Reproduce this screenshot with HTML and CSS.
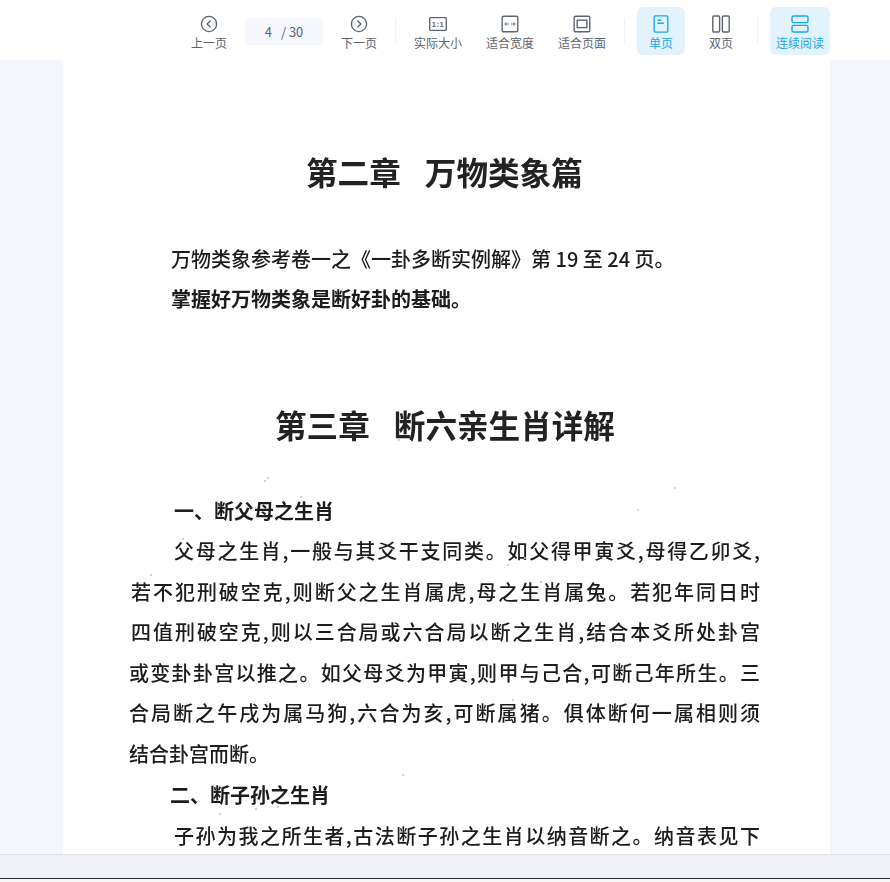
FILE: index.html
```html
<!DOCTYPE html>
<html lang="zh-CN">
<head>
    <meta charset="UTF-8">
    <title>PDF 阅读</title>
    <link rel="stylesheet" href="styles.css">
</head>
<body>

<div class="app">
    <div class="toolbar">
        <div class="tool">
            <svg class="icon" viewBox="0 0 18 18"><circle cx="9" cy="9" r="7.6"/><path d="M10.6 5.6 7.2 9l3.4 3.4"/></svg>
            <span>上一页</span>
        </div>
        <div class="pager"><span class="cur">4</span><span>/ 30</span></div>
        <div class="tool">
            <svg class="icon" viewBox="0 0 18 18"><circle cx="9" cy="9" r="7.6"/><path d="M7.4 5.6 10.8 9l-3.4 3.4"/></svg>
            <span>下一页</span>
        </div>
        <div class="sep"></div>
        <div class="tool wide">
            <svg class="icon" viewBox="0 0 18 18"><rect x="0.7" y="2.6" width="16.6" height="12.8" rx="1"/><text x="9" y="11.6" class="ratio">1:1</text></svg>
            <span>实际大小</span>
        </div>
        <div class="tool wide">
            <svg class="icon" viewBox="0 0 18 18"><rect x="1.2" y="1.2" width="15.6" height="15.6" rx="1.4"/><path class="thin" d="M3.8 9h4.2M5.5 7.2 3.8 9l1.7 1.8M14.2 9H10M12.5 7.2 14.2 9l-1.7 1.8"/></svg>
            <span>适合宽度</span>
        </div>
        <div class="tool wide">
            <svg class="icon" viewBox="0 0 18 18"><rect x="1.2" y="1.2" width="15.6" height="15.6" rx="1.4"/><rect x="4.2" y="5.2" width="9.6" height="7.4"/></svg>
            <span>适合页面</span>
        </div>
        <div class="sep"></div>
        <div class="tool active">
            <svg class="icon" viewBox="0 0 18 18"><rect x="2.2" y="0.9" width="13.6" height="16.2" rx="1.2"/><path d="M5.4 5.2h4M5.4 8.2h6.4"/></svg>
            <span>单页</span>
        </div>
        <div class="tool">
            <svg class="icon" viewBox="0 0 18 18"><rect x="0.8" y="1" width="6.8" height="16" rx="1"/><rect x="10.4" y="1" width="6.8" height="16" rx="1"/></svg>
            <span>双页</span>
        </div>
        <div class="sep"></div>
        <div class="tool wide active">
            <svg class="icon" viewBox="0 0 18 18"><rect x="1" y="1" width="16" height="6.6" rx="1.4"/><rect x="1" y="10.4" width="16" height="6.6" rx="1.4"/></svg>
            <span>连续阅读</span>
        </div>
    </div>

    <div class="viewer">
        <div class="page">
            <svg class="specks" viewBox="0 0 767 794">
                <circle cx="202" cy="421" r="1"/><circle cx="238" cy="437" r="1"/><circle cx="415" cy="490" r="1.2"/>
                <circle cx="445" cy="505" r="1"/><circle cx="462" cy="498" r="1"/><circle cx="478" cy="522" r="1"/>
                <circle cx="120" cy="479" r="1"/><circle cx="88" cy="515" r="1"/><circle cx="530" cy="612" r="1"/>
                <circle cx="612" cy="428" r="1"/><circle cx="575" cy="450" r="1"/><circle cx="340" cy="715" r="1"/>
                <circle cx="193" cy="749" r="1"/><circle cx="215" cy="747" r="1"/><circle cx="157" cy="754" r="1"/>
                <circle cx="336" cy="380" r="1"/><circle cx="205" cy="418" r="1"/><circle cx="450" cy="640" r="1"/>
            </svg>
            <h1 class="chapter ch2">第二章<span class="gap"></span>万物类象篇</h1>
            <p class="intro first">万物类象参考卷一之《一卦多断实例解》第 19 至 24 页。</p>
            <p class="intro bold">掌握好万物类象是断好卦的基础。</p>
            <h1 class="chapter ch3">第三章<span class="gap"></span>断六亲生肖详解</h1>
            <div class="body">
                <p class="sub sub1">一、断父母之生肖</p>
                <p class="line indent">父母之生肖,一般与其爻干支同类。如父得甲寅爻,母得乙卯爻,</p>
                <p class="line nudge">若不犯刑破空克,则断父之生肖属虎,母之生肖属兔。若犯年同日时</p>
                <p class="line nudge">四值刑破空克,则以三合局或六合局以断之生肖,结合本爻所处卦宫</p>
                <p class="line">或变卦卦宫以推之。如父母爻为甲寅,则甲与己合,可断己年所生。三</p>
                <p class="line">合局断之午戌为属马狗,六合为亥,可断属猪。俱体断何一属相则须</p>
                <p class="line short">结合卦宫而断。</p>
                <p class="sub sub2">二、断子孙之生肖</p>
                <p class="line indent last">子孙为我之所生者,古法断子孙之生肖以纳音断之。纳音表见下</p>
            </div>
        </div>
    </div>

    <div class="statusbar"></div>
    <div class="winedge"></div>
</div>

</body>
</html>
```

FILE: styles.css
```css
:root {
    --ink: #1c1c1c;
    --blue: #1ea7ea;
    --tool-text: #5d6470;
    --tool-icon: #5f6672;
    --viewer-bg: #f5f6fb;
}

* { box-sizing: border-box; }

body {
    margin: 0;
    background: var(--viewer-bg);
    font-family: "Noto Sans CJK SC", "Noto Sans", sans-serif;
}

.app { display: flex; flex-direction: column; height: 882px; overflow: hidden; }

/* toolbar */
.toolbar {
    flex: none;
    height: 60px;
    background: #fff;
    display: flex;
    justify-content: flex-end;
    align-items: center;
    gap: 12px;
    padding: 2px 60px 0 0;
}

.tool {
    width: 48px;
    height: 48px;
    padding-top: 3px;
    border-radius: 6px;
    display: flex;
    flex-direction: column;
    align-items: center;
    justify-content: center;
    font-size: 12px;
    line-height: 16px;
    color: var(--tool-text);
}
.tool.wide { width: 60px; }
.tool.active { background: #e3f3fd; color: var(--blue); }

.icon {
    width: 18px;
    height: 18px;
    margin-bottom: 2px;
    fill: none;
    stroke: var(--tool-icon);
    stroke-width: 1.4;
}
.icon .thin { stroke-width: 0.9; }
.icon .ratio {
    font-family: "Liberation Sans", sans-serif;
    font-size: 7.5px;
    font-weight: 700;
    letter-spacing: 0.5px;
    text-anchor: middle;
    fill: var(--tool-icon);
    stroke: none;
}
.active .icon { stroke: var(--blue); }

.pager {
    width: 78px;
    height: 27px;
    border-radius: 4px;
    background: #f6f7fc;
    display: flex;
    justify-content: center;
    align-items: center;
    gap: 9px;
    font-size: 13px;
    color: #5d6470;
}

.sep { width: 1px; height: 26px; background: #f1f2f5; }

/* document */
.viewer { flex: 1; min-height: 0; overflow: hidden; }

.page {
    position: relative;
    width: 767px;
    height: 794px;
    margin-left: 63px;
    background: #fff;
    color: var(--ink);
    font-weight: 500;
    filter: blur(0.35px);
}

.specks { position: absolute; top: 0; left: 0; width: 100%; height: 100%; fill: #c4c4c4; }

.page p, .page h1 { margin: 0; white-space: nowrap; }

.chapter { font-weight: 700; font-size: 31.6px; line-height: 44px; color: #222; }
.chapter .gap { display: inline-block; width: 24px; }
.ch2 { padding: 89px 0 0 243px; }
.ch3 { padding: 0 0 0 212px; margin-top: 83px !important; }

.intro { font-size: 20px; line-height: 40px; padding-left: 108px; }
.intro.first { margin-top: 46px; }
.intro.bold { font-weight: 700; }

.body { padding: 0 70px 0 66px; margin-top: 45px; }

.sub { font-size: 20px; line-height: 40px; font-weight: 700; }
.sub1 { padding-left: 45px; }
.sub2 { padding-left: 41px; }

.line {
    font-size: 20px;
    line-height: 40.6px;
    text-align: justify;
    text-align-last: justify;
    white-space: normal !important;
}
.line.indent { padding-left: 45px; }
.line.nudge { padding-left: 2px; }
.line.short { text-align-last: left; }
.line.last { margin-top: 1px !important; }

/* bottom */
.statusbar { flex: none; height: 24px; background: #f0f1f7; border-top: 1px solid #e2e3e8; }
.winedge { flex: none; height: 4px; background: #f6f6f6; border-top: 1px solid #23232e; }
```
